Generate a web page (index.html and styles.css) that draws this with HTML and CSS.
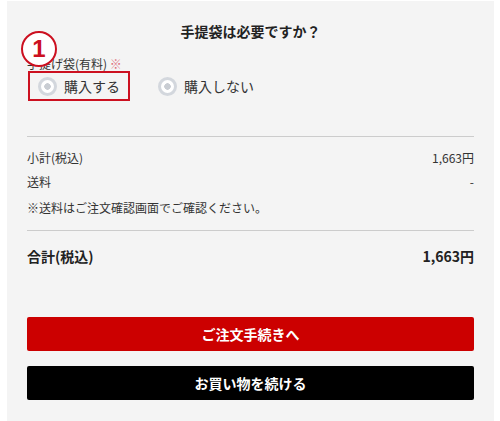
FILE: index.html
```html
<!DOCTYPE html>
<html lang="ja">
<head>
  <meta charset="UTF-8">
  <meta name="viewport" content="width=device-width, initial-scale=1.0">
  <title>カート</title>
  <link rel="stylesheet" href="styles.css">
</head>
<body>
  <div class="panel">
    <h2 class="title">手提袋は必要ですか？</h2>

    <div class="bag-label">手提げ袋(有料) <span class="mark">※</span></div>
    <div class="radios">
      <label class="radio selected">
        <span class="dot"></span>
        <span>購入する</span>
      </label>
      <label class="radio">
        <span class="dot"></span>
        <span>購入しない</span>
      </label>
      <!-- 説明用の番号 -->
      <span class="step">1</span>
    </div>

    <div class="summary">
      <div class="row">
        <span>小計(税込)</span>
        <span>1,663円</span>
      </div>
      <div class="row">
        <span>送料</span>
        <span>-</span>
      </div>
      <p class="note">※送料はご注文確認画面でご確認ください。</p>
    </div>

    <div class="row total">
      <span>合計(税込)</span>
      <span>1,663円</span>
    </div>

    <div class="buttons">
      <button class="btn btn-order">ご注文手続きへ</button>
      <button class="btn btn-continue">お買い物を続ける</button>
    </div>
  </div>
</body>
</html>
```

FILE: styles.css
```css
body {
  margin: 0;
  background: #ffffff;
  font-family: "Noto Sans CJK JP", "Noto Sans", sans-serif;
  color: #333;
}

.panel {
  margin: 1px 0 0 7px;
  width: 487px;
  min-height: 420px;
  box-sizing: border-box;
  background: #f4f4f4;
  padding: 20px 20px 0;
}

.title {
  margin: 0;
  font-size: 14px;
  line-height: 20px;
  font-weight: bold;
  text-align: center;
  color: #222;
}

.bag-label {
  margin-top: 15px;
  font-size: 12px;
  line-height: 15px;
}

.bag-label .mark {
  color: #e0707a;
}

.radios {
  position: relative;
  display: flex;
  align-items: center;
  gap: 28px;
  margin-left: 1px;
}

.radio {
  display: flex;
  align-items: center;
  gap: 7px;
  height: 30px;
  box-sizing: border-box;
  font-size: 14px;
}

.radio.selected {
  border: 2px solid #cc1020;
  padding: 0 8px 0 8px;
}

.dot {
  width: 19px;
  height: 19px;
  box-sizing: border-box;
  border: 3px solid #d3d7dd;
  border-radius: 50%;
  background: radial-gradient(circle, #c9cdd3 0 3px, #ffffff 3.5px);
}

.step {
  position: absolute;
  left: -7px;
  top: -40px;
  width: 36px;
  height: 36px;
  box-sizing: border-box;
  border: 2px solid #cc1020;
  border-radius: 50%;
  background: #ffffff;
  color: #cc1020;
  font-family: "Liberation Sans", Arial, sans-serif;
  font-size: 24px;
  font-weight: bold;
  line-height: 32px;
  text-align: center;
}

.summary {
  margin-top: 35px;
  border-top: 1px solid #cccccc;
  border-bottom: 1px solid #cccccc;
  padding: 9px 0 10px;
}

.row {
  display: flex;
  justify-content: space-between;
  font-size: 12px;
  line-height: 24px;
}

.note {
  margin: 0;
  font-size: 12px;
  line-height: 24px;
  padding-top: 2px;
}

.total {
  font-size: 14px;
  font-weight: bold;
  color: #222;
  padding-top: 13px;
}

.buttons {
  display: flex;
  flex-direction: column;
  gap: 15px;
  margin-top: 49px;
}

.btn {
  height: 34px;
  border: none;
  border-radius: 2px;
  color: #ffffff;
  font-family: inherit;
  font-size: 14px;
  font-weight: bold;
  cursor: pointer;
}

.btn-order {
  background: #cc0000;
}

.btn-continue {
  background: #000000;
}
```
